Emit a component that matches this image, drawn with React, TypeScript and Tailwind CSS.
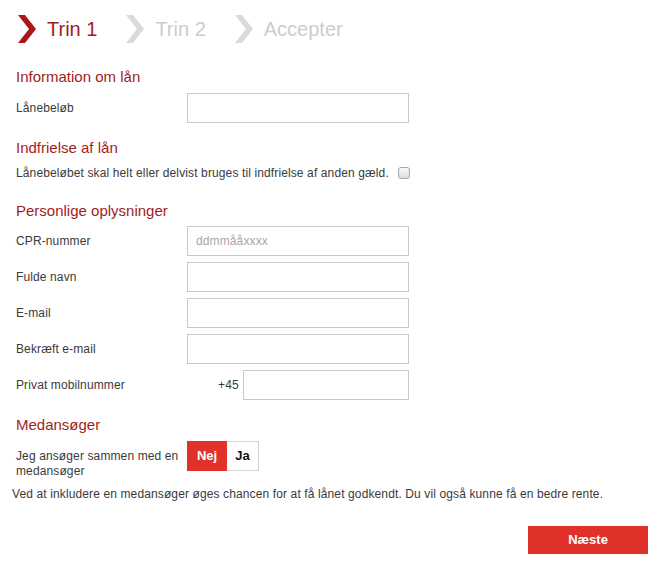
import React from 'react';

const Chevron: React.FC<{ color: string }> = ({ color }) => (
  <svg width="18" height="28" viewBox="0 0 18 28">
    <polygon points="0,0 7,0 18,14 7,28 0,28 11,14" fill={color} />
  </svg>
);

const Heading: React.FC<{ children: React.ReactNode; className?: string }> = ({ children, className = '' }) => (
  <h2 className={`pl-[16px] text-[15px] leading-[18px] tracking-normal text-[#a21d1d] ${className}`}>{children}</h2>
);

const Field: React.FC<{ label: string; placeholder?: string; prefix?: string }> = ({ label, placeholder, prefix }) => (
  <div className="flex items-center h-[30px] pl-[16px]">
    <label className="w-[171px] shrink-0">{label}</label>
    {prefix ? (
      <div className="flex items-center">
        <span className="w-[56px] pl-[31px]">{prefix}</span>
        <input className="w-[166px] h-[30px] border border-[#c9c9c9] bg-white px-[8px] outline-none" />
      </div>
    ) : (
      <input
        placeholder={placeholder}
        className="w-[222px] h-[30px] border border-[#c9c9c9] bg-white px-[8px] outline-none placeholder:text-[#a8a8a8]"
      />
    )}
  </div>
);

const App: React.FC = () => {
  const steps = [
    { label: 'Trin 1', active: true },
    { label: 'Trin 2', active: false },
    { label: 'Accepter', active: false },
  ];

  return (
    <div className="w-[670px] h-[575px] bg-white text-[12px] tracking-[0.12px] text-[#3a3a3a] font-['Liberation_Sans',Arial,sans-serif] pt-[15px]">
      {/* step header */}
      <div className="flex items-center h-[28px] pl-[18px] tracking-normal">
        {steps.map((s, i) => (
          <div key={i} className="flex items-center mr-[29px]">
            <Chevron color={s.active ? '#a8181a' : '#dadada'} />
            <span className={`ml-[11px] text-[20px] leading-[28px] ${s.active ? 'text-[#a21d1d]' : 'text-[#cccccc]'}`}>
              {s.label}
            </span>
          </div>
        ))}
      </div>

      <Heading className="mt-[25px]">Information om lån</Heading>
      <div className="mt-[7px]">
        <Field label="Lånebeløb" />
      </div>

      <Heading className="mt-[16px]">Indfrielse af lån</Heading>
      <div className="mt-[8px] pl-[16px] flex items-center h-[16px]">
        <span>Lånebeløbet skal helt eller delvist bruges til indfrielse af anden gæld.</span>
        <span className="ml-[9px] w-[12px] h-[12px] rounded-[3px] border border-[#a9a9a9] bg-gradient-to-b from-[#fafafa] to-[#dcdcdc]" />
      </div>

      <Heading className="mt-[21px]">Personlige oplysninger</Heading>
      <div className="mt-[6px] flex flex-col gap-[6px]">
        <Field label="CPR-nummer" placeholder="ddmmååxxxx" />
        <Field label="Fulde navn" />
        <Field label="E-mail" />
        <Field label="Bekræft e-mail" />
        <Field label="Privat mobilnummer" prefix="+45" />
      </div>

      <Heading className="mt-[16px]">Medansøger</Heading>
      <div className="mt-[7px] pl-[16px] flex items-start">
        <div className="w-[171px] shrink-0 pt-[8px] pr-[6px] leading-[15px]">Jeg ansøger sammen med en medansøger</div>
        <div className="flex h-[30px] text-[13px] font-bold tracking-normal">
          <button className="w-[40px] h-[30px] bg-[#e0312a] text-white">Nej</button>
          <button className="w-[32px] h-[30px] border border-[#d4d4d4] border-l-0 bg-white text-[#111]">Ja</button>
        </div>
      </div>

      <p className="mt-[7px] pl-[12px] leading-[16px]">
        Ved at inkludere en medansøger øges chancen for at få lånet godkendt. Du vil også kunne få en bedre rente.
      </p>

      <div className="mt-[24px] flex justify-end pr-[22px]">
        <button className="w-[120px] h-[28px] bg-[#e0312a] text-white text-[13px] font-bold tracking-normal">Næste</button>
      </div>
    </div>
  );
};

export default App;
